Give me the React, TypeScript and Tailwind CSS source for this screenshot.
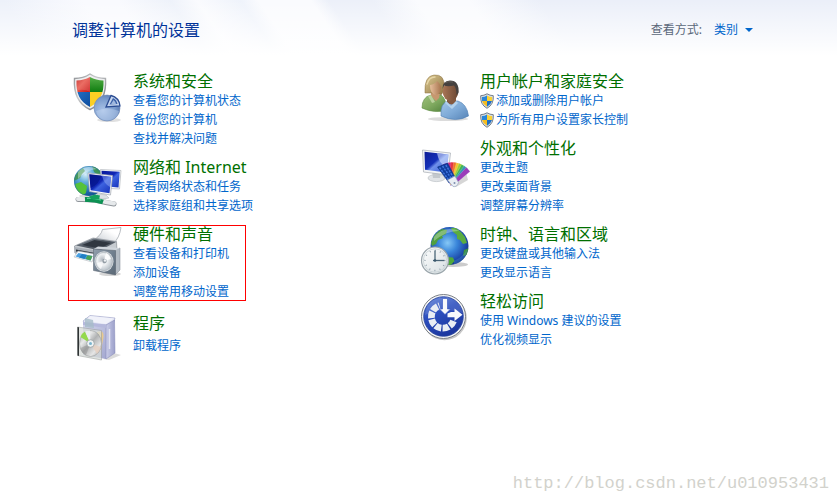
import type { ReactNode } from "react";
import clsx from "clsx";

interface TaskLink {
  label: string;
  shield?: boolean;
}

interface CategoryProps {
  icon: ReactNode;
  title: string;
  links: TaskLink[];
  highlighted?: boolean;
  spacious?: boolean;
}

function IconFrame({ children }: { children: ReactNode }) {
  return (
    <svg
      className="mt-px size-12 shrink-0 overflow-visible"
      viewBox="0 0 48 48"
      fill="none"
      aria-hidden="true"
    >
      {children}
    </svg>
  );
}

function SecurityIcon() {
  return (
    <IconFrame>
      <defs>
        <linearGradient id="sec-rim" x1="0" y1="0" x2="1" y2="1">
          <stop offset="0" stopColor="#8f9296" />
          <stop offset="0.4" stopColor="#c8cacc" />
          <stop offset="1" stopColor="#66686c" />
        </linearGradient>
        <linearGradient id="sec-red" x1="0" y1="0" x2="1" y2="1">
          <stop offset="0" stopColor="#b80c0c" />
          <stop offset="0.5" stopColor="#e8564a" />
          <stop offset="1" stopColor="#c81414" />
        </linearGradient>
        <linearGradient id="sec-green" x1="0" y1="0" x2="0" y2="1">
          <stop offset="0" stopColor="#5fb44e" />
          <stop offset="1" stopColor="#0f7d10" />
        </linearGradient>
        <linearGradient id="sec-blue" x1="0" y1="0" x2="1" y2="1">
          <stop offset="0" stopColor="#2470c4" />
          <stop offset="1" stopColor="#0a4a9c" />
        </linearGradient>
        <radialGradient id="sec-pie" cx="0.35" cy="0.6" r="0.75">
          <stop offset="0" stopColor="#abc4e8" />
          <stop offset="0.6" stopColor="#7b9ccd" />
          <stop offset="1" stopColor="#4f6fa9" />
        </radialGradient>
        <clipPath id="sec-clip">
          <path d="M17 4C21 6 25.500 7.500 30.500 7.500C31 20 27.500 28.500 17 34C6.500 28.500 3 20 3.500 7.500C8.500 7.500 13 6 17 4Z" />
        </clipPath>
      </defs>
      <ellipse cx="36" cy="47" rx="12" ry="2" fill="#000" opacity="0.12" />
      <path
        d="M17 1C21.500 4 27 5.500 32.500 5.500C33.500 21 29 31 17 36.500C5 31 .5 21 1.500 5.500C7 5.500 12.500 4 17 1Z"
        fill="#eeeff0"
        stroke="url(#sec-rim)"
        strokeWidth="1.400"
      />
      <g clipPath="url(#sec-clip)">
        <path d="M2 2H17V19H2Z" fill="url(#sec-red)" />
        <path d="M17 2H33V19H17Z" fill="url(#sec-green)" />
        <path d="M2 19H17V36H2Z" fill="url(#sec-blue)" />
        <path d="M17 19H33V36H17Z" fill="#fbcf24" />
        <path d="M3 7Q13 6 17 3V19Q10 15 3 18Z" fill="#fff" opacity="0.14" />
      </g>
      <circle cx="34" cy="35" r="13" fill="url(#sec-pie)" stroke="#7189b4" strokeWidth="0.600" />
      <path d="M23 38Q34 33 46 38Q44 47 34 47.500Q25 47 23 38Z" fill="#c8daf2" opacity="0.4" />
      <path d="M33 34L38 22.500Q46 24.500 47 33Z" fill="#c4d5ee" stroke="#2b4c93" strokeWidth="1.300" />
      <path d="M36.500 31.500L40 25Q43.500 26.500 44.500 31Z" fill="#3e63a9" />
      <path d="M38 31.300L40.500 27Q42.500 28.500 43 31Z" fill="#9fb8df" />
    </IconFrame>
  );
}

function NetworkIcon() {
  return (
    <IconFrame>
      <defs>
        <radialGradient id="net-sea" cx="0.38" cy="0.28" r="0.75">
          <stop offset="0" stopColor="#d4edf8" />
          <stop offset="0.35" stopColor="#63aedb" />
          <stop offset="0.8" stopColor="#1c66aa" />
          <stop offset="1" stopColor="#124a8c" />
        </radialGradient>
        <linearGradient id="net-screen" x1="0" y1="0" x2="1" y2="1">
          <stop offset="0" stopColor="#0a1a9c" />
          <stop offset="0.45" stopColor="#1026b4" />
          <stop offset="0.55" stopColor="#3d63e0" />
          <stop offset="1" stopColor="#1530b8" />
        </linearGradient>
        <clipPath id="net-globe">
          <circle cx="16" cy="22" r="15" />
        </clipPath>
      </defs>
      <ellipse cx="17" cy="37" rx="11" ry="2" fill="#000" opacity="0.15" />
      <circle cx="16" cy="22" r="15" fill="url(#net-sea)" />
      <g clipPath="url(#net-globe)">
        <path d="M2 17Q5 12 10 9L12 12L9 15L7 19L3 21L0 22Z" fill="#3f9440" opacity="0.8" />
        <path d="M2 25L8 23L14 27L13 34L9 37L4 33Z" fill="#55c23a" />
        <path d="M19 7L27 9L30 15L25 16L21 13Z" fill="#3b9348" opacity="0.85" />
        <path d="M5 13Q13 4 24 10Q13 11 5 20Z" fill="#fff" opacity="0.35" />
      </g>
      <circle cx="16" cy="22" r="14.600" stroke="#2a6f9c" strokeWidth="0.700" opacity="0.6" />
      <path d="M27.500 10.500L48 11.500L46.500 30L28 29Z" fill="#f4f6f8" stroke="#a7acb4" strokeWidth="0.600" />
      <path d="M28.500 11.700L46.700 12.700L45.500 28.500L29.500 27Z" fill="url(#net-screen)" />
      <path d="M25 35L33 36L36 39Q29 41.500 22 38.500Z" fill="#dde1e6" stroke="#a9aeb5" strokeWidth="0.500" />
      <path d="M15 14L39.500 16.500L37.500 36L16.500 32.500Z" fill="#fafbfc" stroke="#9fa5ae" strokeWidth="0.700" />
      <path d="M16.300 15.300L38.200 17.700L36.500 34.300L17.600 31.200Z" fill="url(#net-screen)" />
      <path d="M16.300 15.300L28 16.600Q27 25 17.500 29Z" fill="#000d7a" opacity="0.5" />
      <path d="M29 16.700L38.200 17.700L37 28Q31 25 29 16.700Z" fill="#8fa9f4" opacity="0.5" />
      <path d="M5 40.500Q22 40 33 43.500L41 45" stroke="#8f959b" strokeWidth="5" strokeLinecap="round" />
      <path d="M5 40Q22 39.500 33 43L41 44.500" stroke="#e6e9eb" strokeWidth="4" strokeLinecap="round" />
      <path d="M12 40.500Q21 40 30 43" stroke="#0d9153" strokeWidth="5" />
      <path d="M14 39.300Q21 39 28 41" stroke="#5fdc9b" strokeWidth="1.200" />
      <path d="M16 37.500L22 35.500L27 36.500L26 40.500L18 40Z" fill="#15a05f" />
    </IconFrame>
  );
}

function HardwareIcon() {
  return (
    <IconFrame>
      <defs>
        <linearGradient id="hw-body" x1="0" y1="0" x2="1" y2="1">
          <stop offset="0" stopColor="#8a939d" />
          <stop offset="0.5" stopColor="#4a525c" />
          <stop offset="1" stopColor="#757d87" />
        </linearGradient>
        <linearGradient id="hw-paper" x1="0" y1="1" x2="1" y2="0">
          <stop offset="0" stopColor="#bfc5cc" />
          <stop offset="0.7" stopColor="#fff" />
        </linearGradient>
        <linearGradient id="hw-box" x1="0" y1="0" x2="1" y2="1">
          <stop offset="0" stopColor="#93a0ad" />
          <stop offset="0.5" stopColor="#71808f" />
          <stop offset="1" stopColor="#5b6976" />
        </linearGradient>
        <radialGradient id="hw-cone" cx="0.4" cy="0.4" r="0.6">
          <stop offset="0" stopColor="#b2b9c0" />
          <stop offset="0.5" stopColor="#eef1f3" />
          <stop offset="1" stopColor="#bbc3ca" />
        </radialGradient>
      </defs>
      <path d="M20 14Q28 10 29.500 3.500L48 1.500Q46.500 12 40 18L20 16Z" fill="url(#hw-paper)" stroke="#9ba1a8" strokeWidth="0.700" />
      <path d="M1.500 20L20 12L43.500 15.500L44 26L27 33L2 27Z" fill="#c6cbd0" stroke="#7a8189" strokeWidth="0.600" />
      <path d="M3 19.500L20.500 12.500L43 16L27 24.500Z" fill="url(#hw-body)" />
      <path d="M9 19L21.500 14L38 17L27 22.500Z" fill="#303740" />
      <path d="M1.500 21L27 25V33L1.500 27Z" fill="#aab1b9" />
      <path d="M3 23.500L25 27.500V29L3 25.500Z" fill="#353b43" />
      <path d="M5 25L22 28L19 36L1 31Z" fill="#f7f9fa" stroke="#a4aab0" strokeWidth="0.500" />
      <path d="M5.500 27L19.500 30L17.500 34.500L2.500 30.500Z" fill="#4aa0e2" />
      <path d="M9 28L14 29L11.500 33L6 31.500Z" fill="#217fc4" />
      <path d="M14.500 29.200L19.500 30L17.500 34.500L12.500 33Z" fill="#48a455" />
      <ellipse cx="37" cy="48" rx="11" ry="2" fill="#000" opacity="0.16" />
      <path d="M42 24L47 22V44L42 49Z" fill="#b4bcc4" stroke="#7e8790" strokeWidth="0.500" />
      <path d="M20.500 23L25 20.500L47 22L42.500 24.500Z" fill="#d0d6dc" />
      <path d="M20.500 23L42.500 24.500V49L20.500 44.500Z" fill="url(#hw-box)" stroke="#56616c" strokeWidth="0.500" />
      <ellipse cx="31" cy="35.500" rx="9.500" ry="10.200" fill="#dee2e5" />
      <ellipse cx="31" cy="35.500" rx="8.500" ry="9.200" fill="url(#hw-cone)" stroke="#a5adb4" strokeWidth="0.600" />
      <path d="M31 35L33 27Q37 29 38 33Z" fill="#fff" opacity="0.9" />
      <path d="M31 35L28 43Q24.500 41 24 37Z" fill="#fff" opacity="0.7" />
      <circle cx="31.500" cy="35" r="2.200" fill="#949da6" />
      <circle cx="32" cy="34.500" r="1.200" fill="#eef1f3" />
    </IconFrame>
  );
}

function ProgramsIcon() {
  return (
    <IconFrame>
      <defs>
        <linearGradient id="prog-front" x1="0" y1="0" x2="1" y2="1">
          <stop offset="0" stopColor="#d3d6ec" />
          <stop offset="1" stopColor="#a4a8d0" />
        </linearGradient>
        <linearGradient id="prog-side" x1="0" y1="0" x2="1" y2="0">
          <stop offset="0" stopColor="#c9cce8" />
          <stop offset="1" stopColor="#9ca0ca" />
        </linearGradient>
        <linearGradient id="prog-disc" x1="0" y1="0" x2="1" y2="1">
          <stop offset="0" stopColor="#a0a2a2" />
          <stop offset="0.3" stopColor="#e8e9e9" />
          <stop offset="0.5" stopColor="#b0b2b3" />
          <stop offset="0.75" stopColor="#e6e6e6" />
          <stop offset="1" stopColor="#9a9a9a" />
        </linearGradient>
      </defs>
      <path d="M30 44L41 38L48 40L36 45Z" fill="#000" opacity="0.14" />
      <path d="M10 6L17 .5L42 3L40 10H13Z" fill="#dfe2f3" stroke="#9a9dc6" strokeWidth="0.600" />
      <path d="M17 1L41 3.500L33 9L12 6Z" fill="#f1f2fa" />
      <path d="M10 7L33 10V44L10 40Z" fill="url(#prog-front)" />
      <path d="M33 10L41.500 5L42 38L33 44Z" fill="url(#prog-side)" stroke="#8185b5" strokeWidth="0.500" />
      <path d="M10 7L33 9.500L34 13L10 10Z" fill="#b5b8dc" />
      <path d="M12 3L20 5L21 13L12 12Z" fill="#a6bbc8" opacity="0.8" />
      <path d="M24 17Q31 14 30.500 22L28 36L24 30Z" fill="#e7c98f" />
      <path d="M36.500 14V34" stroke="#fff" strokeWidth="1.500" opacity="0.6" />
      <path d="M4.500 12L28.500 15.500V45L4.500 40.500Z" fill="#d7dcd8" stroke="#959a98" strokeWidth="0.700" opacity="0.75" />
      <path d="M4.500 12L6 12.300V41L4.500 40.500Z" fill="#2f3334" />
      <ellipse cx="17.500" cy="28.500" rx="11" ry="13" fill="url(#prog-disc)" stroke="#8d9190" strokeWidth="0.500" />
      <path d="M17.500 28.500L7.500 22Q9 18 12 16.500Z" fill="#93d94e" />
      <path d="M17.500 28.500L12 16.500Q14 15 17 15.500Z" fill="#e9edf0" />
      <path d="M17.500 28.500L28 32Q26.500 37 24 39Z" fill="#e6cfc0" opacity="0.8" />
      <path d="M17.500 28.500L13 40Q9 38 7.500 33Z" fill="#777" opacity="0.35" />
      <circle cx="17.500" cy="28.500" r="3.800" fill="#eef2f3" stroke="#92989a" strokeWidth="0.700" />
      <circle cx="17.500" cy="28.500" r="1.500" fill="#7bb4ce" />
    </IconFrame>
  );
}

function UsersIcon() {
  return (
    <IconFrame>
      <defs>
        <linearGradient id="usr-green" x1="0" y1="0" x2="1" y2="1">
          <stop offset="0" stopColor="#9fc07c" />
          <stop offset="0.5" stopColor="#7fa95f" />
          <stop offset="1" stopColor="#4f7f3a" />
        </linearGradient>
        <linearGradient id="usr-blue" x1="0" y1="0" x2="1" y2="1">
          <stop offset="0" stopColor="#a2c6e6" />
          <stop offset="0.5" stopColor="#7fabd8" />
          <stop offset="1" stopColor="#5683b6" />
        </linearGradient>
        <linearGradient id="usr-hair" x1="0" y1="0" x2="1" y2="1">
          <stop offset="0" stopColor="#dcca93" />
          <stop offset="1" stopColor="#8f7442" />
        </linearGradient>
        <linearGradient id="usr-face" x1="0" y1="0" x2="1" y2="0">
          <stop offset="0" stopColor="#e6bf9c" />
          <stop offset="1" stopColor="#a8754f" />
        </linearGradient>
        <linearGradient id="usr-man" x1="0" y1="0" x2="1" y2="0">
          <stop offset="0" stopColor="#a87556" />
          <stop offset="1" stopColor="#6b4833" />
        </linearGradient>
      </defs>
      <ellipse cx="28" cy="46" rx="20" ry="2" fill="#000" opacity="0.14" />
      <path d="M2 35Q2 24 11 22H21Q26 25 27 37Q15 41 2 35Z" fill="url(#usr-green)" stroke="#5b893e" strokeWidth="0.600" />
      <path d="M11 20H20L19 25L16 28L11 23Z" fill="#c6976f" />
      <path d="M11 22L15 29L12 30L8 23Z" fill="#b9d19c" />
      <path d="M5 20Q4 3 14 2Q25 1 24 14Q23.500 20 21 22L18 20L7 20Z" fill="url(#usr-hair)" stroke="#8b7040" strokeWidth="0.500" />
      <path d="M10 12Q15 11 17 8Q22 12 21 17Q18 23 15 22Q10 20 10 12Z" fill="url(#usr-face)" />
      <path d="M7 11Q9 4 15 4" stroke="#f4e5b8" strokeWidth="1.500" strokeLinecap="round" opacity="0.7" />
      <path d="M21 43Q20 30 28 28H38Q47 31 48.500 43Q36 50 21 43Z" fill="url(#usr-blue)" stroke="#4f7eb2" strokeWidth="0.600" />
      <path d="M27 25H36V29Q32 34 27 29Z" fill="#845a41" />
      <path d="M26 28L31 33L36 28L38 30L32 36L25 30Z" fill="#b3d2ec" />
      <ellipse cx="30.500" cy="18.500" rx="7.800" ry="9.500" fill="url(#usr-man)" />
      <path d="M22.500 16Q22 8 30 7.500Q39.500 7.500 38.500 20L36.500 22Q36.500 15 34 12.500Q28 14 24 12.500Z" fill="#45413f" />
      <path d="M24 10Q28 8 33 9" stroke="#77716c" strokeWidth="1" opacity="0.6" />
    </IconFrame>
  );
}

// Swatches run clockwise around the handle of the fan
const swatches = [
  { angle: -22, color: "#3f52d4" },
  { angle: -15, color: "#7238c4" },
  { angle: -8, color: "#a62bb0" },
  { angle: -1, color: "#d4247c" },
  { angle: 6, color: "#e3303a" },
  { angle: 13, color: "#ef7426" },
  { angle: 20, color: "#f3c42c" },
  { angle: 27, color: "#9ccb36" },
  { angle: 34, color: "#3fb554" },
  { angle: 41, color: "#3893b8" },
  { angle: 48, color: "#9a3cba" },
];

function AppearanceIcon() {
  return (
    <IconFrame>
      <defs>
        <linearGradient id="app-screen" x1="0" y1="0" x2="1" y2="1">
          <stop offset="0" stopColor="#0c1c96" />
          <stop offset="0.45" stopColor="#1430b8" />
          <stop offset="0.55" stopColor="#6f90ea" />
          <stop offset="1" stopColor="#2d56d8" />
        </linearGradient>
      </defs>
      <ellipse cx="16.500" cy="38" rx="8.500" ry="3.600" fill="#e1e4e7" stroke="#b3b8bd" strokeWidth="0.600" />
      <path d="M12 31H21L20 38H13Z" fill="#c3c8cd" />
      <path d="M2.500 10L30.500 13L28 35L3.500 32Z" fill="#f3f5f6" stroke="#a6acb3" strokeWidth="0.700" />
      <path d="M4.500 11.700L28.500 14.500L26.500 32.500L5 29.800Z" fill="url(#app-screen)" />
      <path d="M17 13.200L28.500 14.500L27 28Q19 24 17 13.200Z" fill="#d6e3ff" opacity="0.6" />
      <path d="M30 45L46 32L48 40L36 47Z" fill="#000" opacity="0.16" />
      {swatches.map(({ angle, color }) => (
        <path
          key={angle}
          d="M30.500 45L28.500 22.500H34L33.500 45Z"
          fill={color}
          stroke="#ffffff"
          strokeOpacity="0.4"
          strokeWidth="0.400"
          transform={`rotate(${angle} 32 45)`}
        />
      ))}
      <path d="M17.500 27L27.500 23L35.500 38L29 43Z" fill="#103c9c" stroke="#0a2a78" strokeWidth="0.500" />
      <path
        d="M19.500 27.500L29.500 41M22.500 26L32 39.500M25.800 25L34 38.500"
        stroke="#3f74dc"
        strokeWidth="1.500"
        strokeDasharray="2.200 1"
      />
      <path d="M27.500 40L35 36L38.500 42.500Q37 47.500 33 46.500Z" fill="#e9eef4" stroke="#8e9db8" strokeWidth="0.600" />
      <circle cx="34.500" cy="43" r="1" fill="#7f8fae" />
    </IconFrame>
  );
}

function ClockIcon() {
  return (
    <IconFrame>
      <defs>
        <radialGradient id="clk-sea" cx="0.45" cy="0.42" r="0.62">
          <stop offset="0" stopColor="#86c8f6" />
          <stop offset="0.4" stopColor="#3a86da" />
          <stop offset="0.8" stopColor="#1c47a8" />
          <stop offset="1" stopColor="#102c78" />
        </radialGradient>
        <linearGradient id="clk-face" x1="0" y1="0" x2="1" y2="1">
          <stop offset="0" stopColor="#ffffff" />
          <stop offset="1" stopColor="#d5dde0" />
        </linearGradient>
        <clipPath id="clk-globe">
          <circle cx="29.500" cy="20" r="19" />
        </clipPath>
      </defs>
      <ellipse cx="33" cy="38.500" rx="15" ry="2.500" fill="#000" opacity="0.2" />
      <circle cx="29.500" cy="20" r="19" fill="url(#clk-sea)" />
      <g clipPath="url(#clk-globe)">
        <path d="M11 17Q14 7 22 3L27 4L26 8L22 10L23 12L18 14L16 18L12 20Z" fill="#4f9f3e" />
        <path d="M31 2L36 2Q42 6 45 11L47 17L43 18L40 14L37 13L37 9L33 6Z" fill="#5aac40" />
        <path d="M44 24L49 22L47 29L43 30Z" fill="#3f9140" />
        <path d="M27 31L33 31.500L34.500 35L31 39H27Z" fill="#4fa83b" />
        <path d="M14 11Q24 -1 40 5Q27 4 14 15Z" fill="#fff" opacity="0.3" />
        <path d="M34 35Q43 31 47 23Q46 36 34 39Z" fill="#4f9ae0" opacity="0.3" />
      </g>
      <circle cx="15" cy="34.500" r="13.500" fill="url(#clk-face)" stroke="#9aa5ab" strokeWidth="1.200" />
      <circle cx="15" cy="34.500" r="11.700" stroke="#c7d0d4" strokeWidth="0.800" />
      <circle cx="15" cy="34.500" r="10" stroke="#8a9aa5" strokeWidth="1.400" strokeDasharray="0.900 4.336" strokeDashoffset="0.450" />
      <path d="M15 34.500V24.500" stroke="#4b6678" strokeWidth="1.300" />
      <path d="M13 34.500H24.500" stroke="#4b6678" strokeWidth="1.300" />
      <circle cx="15" cy="34.500" r="1.300" fill="#38566b" />
    </IconFrame>
  );
}

function AccessIcon() {
  return (
    <IconFrame>
      <defs>
        <linearGradient id="acc-disc" x1="0" y1="0" x2="0.500" y2="1">
          <stop offset="0" stopColor="#6486d8" />
          <stop offset="0.45" stopColor="#2c4fbf" />
          <stop offset="1" stopColor="#1c379f" />
        </linearGradient>
      </defs>
      <circle cx="24.500" cy="25" r="22.300" fill="#000" opacity="0.22" />
      <circle cx="23.500" cy="23.500" r="22" fill="#f4f5f6" stroke="#7b8087" strokeWidth="1" />
      <circle cx="23.500" cy="23.500" r="19.800" fill="url(#acc-disc)" stroke="#26419c" strokeWidth="0.800" />
      <path d="M5 22Q7 5 24 4.500Q40 5 42.500 20Q24 13 5 22Z" fill="#fff" opacity="0.12" />
      <path
        d="M33.500 28A11.500 11.500 0 1 1 19.500 12.700"
        stroke="#e9edf4"
        strokeWidth="6.800"
        strokeDasharray="6.200 1.300"
      />
      <path d="M22.500 5.500H27.500V16H30.500L25 21.500L19.500 16H22.500Z" fill="#f7f9fc" stroke="#2c4fbf" strokeWidth="0.600" />
      <path d="M27.500 20.500L31 19H34.500V15.500L42.500 21.700L34.500 28V24.300H27.500Z" fill="#f7f9fc" />
    </IconFrame>
  );
}

function ShieldIcon() {
  return (
    <svg className="-ml-px mr-px size-4 shrink-0" viewBox="0 0 16 16" fill="none" aria-hidden="true">
      <path d="M8 .8Q11 2.600 14.300 2.700Q15 11.500 8 15.300Q1 11.500 1.700 2.700Q5 2.600 8 .8Z" fill="#d8dfe6" stroke="#69727c" strokeWidth="0.900" />
      <path d="M8 2.500V8H3Q2.700 6 3 4Q5.500 4 8 2.500Z" fill="#2a86d8" />
      <path d="M8 2.500Q10.500 4 13 4Q13.300 6 13 8H8Z" fill="#fbd234" />
      <path d="M3 8H8V13.800Q4 11.500 3 8Z" fill="#f6bd1f" />
      <path d="M8 8H13Q12 11.500 8 13.800Z" fill="#1e6fc4" />
    </svg>
  );
}

function Category({ icon, title, links, highlighted, spacious }: CategoryProps) {
  return (
    <section className={clsx("relative flex gap-3", spacious && "mt-[3px]")}>
      {icon}
      <div>
        <h2 className="text-base leading-[19px]">
          <a href="#" className="text-[#006f00] hover:underline">
            {title}
          </a>
        </h2>
        <ul className={clsx("text-xs leading-[19px]", spacious && "mt-[3px]")}>
          {links.map((link) => (
            <li key={link.label}>
              <a href="#" className="flex items-center whitespace-nowrap text-[#0066cc] hover:underline">
                {link.shield && <ShieldIcon />}
                {link.label}
              </a>
            </li>
          ))}
        </ul>
      </div>
      {highlighted && (
        <div className="pointer-events-none absolute inset-y-0 -left-[5px] w-[178px] border border-[#ff0000]" />
      )}
    </section>
  );
}

const leftCategories: CategoryProps[] = [
  {
    icon: <SecurityIcon />,
    title: "系统和安全",
    links: [{ label: "查看您的计算机状态" }, { label: "备份您的计算机" }, { label: "查找并解决问题" }],
  },
  {
    icon: <NetworkIcon />,
    title: "网络和 Internet",
    links: [{ label: "查看网络状态和任务" }, { label: "选择家庭组和共享选项" }],
  },
  {
    icon: <HardwareIcon />,
    title: "硬件和声音",
    links: [{ label: "查看设备和打印机" }, { label: "添加设备" }, { label: "调整常用移动设置" }],
    highlighted: true,
  },
  {
    icon: <ProgramsIcon />,
    title: "程序",
    links: [{ label: "卸载程序" }],
    spacious: true,
  },
];

const rightCategories: CategoryProps[] = [
  {
    icon: <UsersIcon />,
    title: "用户帐户和家庭安全",
    links: [
      { label: "添加或删除用户帐户", shield: true },
      { label: "为所有用户设置家长控制", shield: true },
    ],
  },
  {
    icon: <AppearanceIcon />,
    title: "外观和个性化",
    links: [{ label: "更改主题" }, { label: "更改桌面背景" }, { label: "调整屏幕分辨率" }],
  },
  {
    icon: <ClockIcon />,
    title: "时钟、语言和区域",
    links: [{ label: "更改键盘或其他输入法" }, { label: "更改显示语言" }],
  },
  {
    icon: <AccessIcon />,
    title: "轻松访问",
    links: [{ label: "使用 Windows 建议的设置" }, { label: "优化视频显示" }],
  },
];

function CategoryColumn({ items }: { items: CategoryProps[] }) {
  return (
    <div className="flex flex-col gap-2.5">
      {items.map((item) => (
        <Category key={item.title} {...item} />
      ))}
    </div>
  );
}

export default function App() {
  return (
    <div className="flex min-h-screen flex-col bg-white font-['Noto_Sans','Noto_Sans_CJK_SC',sans-serif]">
      <header className="flex h-[60px] items-center justify-between bg-[linear-gradient(to_bottom,transparent,white_92%),linear-gradient(56deg,#edf1fa_0%,#edf1fa_5%,#f9fafe_14%,#f9fafe_18%,#eef2fa_24%,#fafbfe_27%,#eff3fb_32%,#fafbfe_34%,#fafbfe_40%,#ecf0f9_42%,#ecf0f9_47%,#fafbfe_52%,#fafbfe_58%,#ebeff9_66%,#ebeff9_100%)] pr-[84px] pl-[72px]">
        <h1 className="text-base leading-5 text-[#003399]">调整计算机的设置</h1>
        <div className="flex items-center text-xs">
          <label htmlFor="view-by" className="text-[#5a6779]">
            查看方式:
          </label>
          <div className="relative ml-3">
            <select id="view-by" className="w-[39px] appearance-none bg-transparent text-[#0066cc]">
              <option>类别</option>
              <option>大图标</option>
              <option>小图标</option>
            </select>
            <svg
              className="pointer-events-none absolute top-1/2 right-0 h-1 w-2 -translate-y-1/2"
              viewBox="0 0 8 4"
              aria-hidden="true"
            >
              <path d="M0 0H8L4 4Z" fill="#0066cc" />
            </svg>
          </div>
        </div>
      </header>

      <main className="grid flex-1 grid-cols-2 pt-3 pr-[70px] pl-[73px]">
        <CategoryColumn items={leftCategories} />
        <CategoryColumn items={rightCategories} />
      </main>

      <footer className="pr-2 pb-2 text-right font-['Liberation_Mono',monospace] text-[17px] leading-6 text-[#d2d2cc]">
        http://blog.csdn.net/u010953431
      </footer>
    </div>
  );
}
